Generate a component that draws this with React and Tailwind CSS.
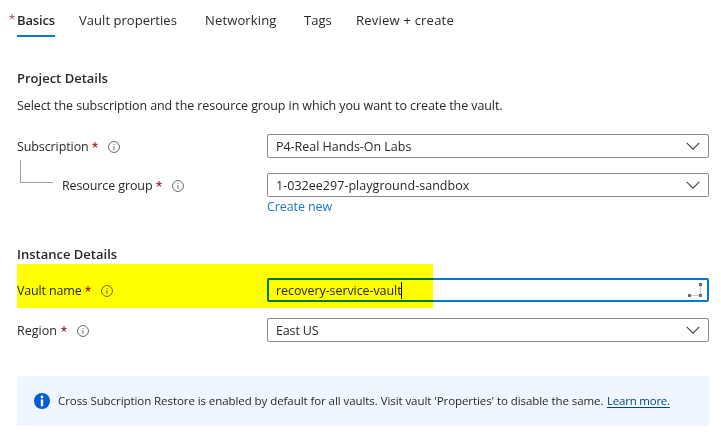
const Chevron = () => (
  <svg className="h-[8px] w-[14px]" viewBox="0 0 14 8" fill="none" stroke="#484644" strokeWidth="1.15">
    <path d="M0.7 0.9 L7 7.2 L13.3 0.9" />
  </svg>
);

const InfoIcon = () => (
  <svg className="mt-[2px] size-[12px]" viewBox="0 0 12 12" fill="none">
    <circle cx="6" cy="6" r="5.45" stroke="#605e5c" strokeWidth="0.95" />
    <rect x="5.5" y="5" width="1" height="4" fill="#73716f" />
    <rect x="5.5" y="3" width="1" height="1" fill="#73716f" />
  </svg>
);

const Star = () => (
  <svg className="mb-[3px] ml-[4px] size-[6px]" viewBox="0 0 6 6" stroke="#a4262c" strokeWidth="1.1">
    <path d="M3 0V3M0.2 2.1L3 3L5.8 2.1M1.3 5.4L3 3L4.7 5.4" fill="none" />
  </svg>
);

const Label = ({ children, width }) => (
  <div className="flex h-6 w-[267px] shrink-0 items-center pl-[17px]">
    <span className={`pt-[2px] whitespace-nowrap ${width}`}>{children}</span>
    <Star />
    <span className="ml-[10px]">
      <InfoIcon />
    </span>
  </div>
);

const Select = ({ children, tracking }) => (
  <div className="flex h-6 w-[442px] items-center justify-between rounded-[2px] border border-[#8a8886] pr-[8px] pl-[8px]">
    <span className={`pt-[2px] ${tracking}`}>{children}</span>
    <Chevron />
  </div>
);

export default function App() {
  return (
    <div className="relative h-[441px] w-[721px] overflow-hidden bg-white font-['Open_Sans','Noto_Sans',sans-serif] text-[12.5px] leading-[18px] text-[#292827]">
      <nav className="flex h-[37px] pl-[9px] text-[13px] whitespace-nowrap">
        <span className="flex w-[8px] pt-[14px]">
          <svg className="size-[6px]" viewBox="0 0 6 6" fill="none" stroke="#b0565a" strokeWidth="1">
            <path d="M3 0V3M0.2 2.1L3 3L5.8 2.1M1.3 5.4L3 3L4.7 5.4" />
          </svg>
        </span>
        <span className="w-[38px] border-b-2 border-[#0078d4] pt-[11px] font-semibold tracking-[-0.15px]">Basics</span>
        <span className="ml-[24px] w-[126px] pt-[11px] tracking-[0.04px]">Vault properties</span>
        <span className="w-[99px] pt-[11px] tracking-[0.15px]">Networking</span>
        <span className="w-[52px] pt-[11px]">Tags</span>
        <span className="pt-[11px] tracking-[0.22px]">Review + create</span>
      </nav>

      <h2 className="mt-[32px] pl-[17px] text-[13px] font-semibold">Project Details</h2>
      <p className="mt-[10px] pl-[17px] tracking-[-0.09px] whitespace-nowrap">
        Select the subscription and the resource group in which you want to create the vault.
      </p>

      <div className="mt-[19px] flex">
        <Label width="w-[71px] tracking-[-0.1px]">Subscription</Label>
        <Select tracking="tracking-[-0.03px]">P4-Real Hands-On Labs</Select>
      </div>
      <div className="flex h-[39px]">
        <div className="w-[53px] shrink-0 pt-[2px] pl-[20px]">
          <div className="h-[23px] w-[33px] border-b border-l border-[#a19f9d]" />
        </div>
        <div className="flex w-[214px] shrink-0 pt-[15px]">
          <div className="flex h-6 items-center pl-[9px]">
            <span className="w-[90px] pt-[2px] tracking-[-0.11px] whitespace-nowrap">Resource group</span>
            <Star />
            <span className="ml-[10px]">
              <InfoIcon />
            </span>
          </div>
        </div>
        <div className="pt-[15px]">
          <Select tracking="tracking-[0.03px]">1-032ee297-playground-sandbox</Select>
        </div>
      </div>
      <a className="block h-[19px] pt-[1px] pl-[267px] tracking-[-0.1px] text-[#1579d0]">Create new</a>

      <h2 className="mt-[29px] pl-[17px] text-[13px] font-semibold">Instance Details</h2>
      <div className="mt-[15px] flex">
        <Label width="w-[64px] tracking-[-0.15px]">Vault name</Label>
        <div className="flex h-6 w-[442px] items-center justify-between rounded-[2px] border-2 border-[#0078d4] pr-[5px] pl-[7px]">
          <div className="flex items-center">
            <span className="w-[125px] pt-[2px] tracking-[-0.08px] whitespace-nowrap">recovery-service-vault</span>
            <span className="h-[17px] w-px bg-black" />
          </div>
          <svg className="size-[14px]" viewBox="0 0 14 14" shapeRendering="crispEdges">
            <path d="M1.5 12.5H12.5V1.5" fill="none" stroke="#c8c8c8" />
            <path d="M0 11h3v3H0zM11 11h3v3h-3zM11 0h3v3h-3z" fill="#60717b" />
          </svg>
        </div>
      </div>
      <div className="mt-[16px] flex">
        <Label width="w-[40px]">Region</Label>
        <Select tracking="tracking-[-0.15px]">East US</Select>
      </div>

      <div className="mt-[34px] ml-[17px] flex h-[50px] w-[692px] items-center rounded-[2px] bg-[#f0f6ff] pl-[17px] text-[11.5px] whitespace-nowrap">
        <svg className="size-[16px]" viewBox="0 0 16 16">
          <circle cx="8" cy="8" r="8" fill="#015cda" />
          <circle cx="8" cy="4" r="1.4" fill="#fff" />
          <rect x="6.8" y="6.5" width="2.4" height="6.8" fill="#fff" />
        </svg>
        <span className="ml-[8px] w-[549px] tracking-[-0.07px]">
          Cross Subcription Restore is enabled by default for all vaults. Visit vault 'Properties' to disable the same.
        </span>
        <a className="tracking-[-0.22px] text-[#004578] underline underline-offset-2">Learn more.</a>
      </div>

      <div className="pointer-events-none absolute top-[264px] left-[17px] h-[44px] w-[416px] bg-[#ffff00] mix-blend-multiply" />
    </div>
  );
}
